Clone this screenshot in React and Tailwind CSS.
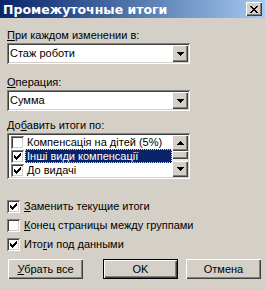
import React from "react";

const sunken =
  "shadow-[inset_1px_1px_0_#808080,inset_-1px_-1px_0_#ffffff,inset_2px_2px_0_#404040,inset_-2px_-2px_0_#d4d0c8]";
const raised =
  "shadow-[inset_1px_1px_0_#ffffff,inset_-1px_-1px_0_#404040,inset_-2px_-2px_0_#808080]";

function CheckMark() {
  const cols = [2, 3, 4, 3, 2, 1, 0];
  return (
    <svg width="7" height="7" viewBox="0 0 7 7" shapeRendering="crispEdges">
      {cols.map((y, x) => (
        <rect key={x} x={x} y={y} width="1" height="3" fill="#000" />
      ))}
    </svg>
  );
}

function Check({ checked }) {
  return (
    <span
      className={`w-[13px] h-[13px] bg-white shrink-0 flex items-center justify-center ${sunken}`}
    >
      {checked && <CheckMark />}
    </span>
  );
}

function DownArrow() {
  return (
    <svg width="7" height="4" viewBox="0 0 7 4" shapeRendering="crispEdges">
      <rect x="0" y="0" width="7" height="1" fill="#000" />
      <rect x="1" y="1" width="5" height="1" fill="#000" />
      <rect x="2" y="2" width="3" height="1" fill="#000" />
      <rect x="3" y="3" width="1" height="1" fill="#000" />
    </svg>
  );
}

function UpArrow() {
  return (
    <svg width="7" height="4" viewBox="0 0 7 4" shapeRendering="crispEdges">
      <rect x="3" y="0" width="1" height="1" fill="#000" />
      <rect x="2" y="1" width="3" height="1" fill="#000" />
      <rect x="1" y="2" width="5" height="1" fill="#000" />
      <rect x="0" y="3" width="7" height="1" fill="#000" />
    </svg>
  );
}

function Combo({ value }) {
  return (
    <div className={`w-[183px] h-[21px] bg-white flex items-center p-[2px] ${sunken}`}>
      <span className="flex-1 pl-[1px]">{value}</span>
      <span
        className={`w-[16px] h-[17px] bg-[#d4d0c8] flex items-center justify-center ${raised}`}
      >
        <DownArrow />
      </span>
    </div>
  );
}

function Button({ children, def }) {
  return (
    <div
      className={`h-[20px] w-[75px] flex items-center justify-center bg-[#d4d0c8] ${
        def
          ? "shadow-[inset_0_0_0_1px_#000,inset_2px_2px_0_#ffffff,inset_-2px_-2px_0_#404040,inset_-3px_-3px_0_#808080]"
          : raised
      }`}
    >
      {children}
    </div>
  );
}

export default function App() {
  return (
    <div className="w-[265px] h-[290px] bg-[#d4d0c8] flex flex-col text-[11px] leading-[13px] text-black font-['Liberation_Sans',Arial,sans-serif] overflow-hidden">
      <div className="h-[18px] bg-linear-to-r from-[#0a246a] to-[#a6caf0] flex items-center justify-between pl-[3px] pr-[3px]">
        <span className="text-white font-bold text-[12.5px] font-['DejaVu_Sans',sans-serif]">
          Промежуточные итоги
        </span>
        <span className={`w-[16px] h-[14px] bg-[#d4d0c8] flex items-center justify-center ${raised}`}>
          <svg width="8" height="7" viewBox="0 0 8 7" shapeRendering="crispEdges">
            {[0, 1, 2, 3, 4, 5, 6].map((i) => (
              <React.Fragment key={i}>
                <rect x={i} y={i} width="2" height="1" fill="#000" />
                <rect x={6 - i} y={i} width="2" height="1" fill="#000" />
              </React.Fragment>
            ))}
          </svg>
        </span>
      </div>

      <div className="flex flex-col px-[7px]">
        <div className="mt-[11px] h-[13px]">
          <span className="underline">П</span>ри каждом изменении в:
        </div>
        <div className="mt-[1px]">
          <Combo value="Стаж роботи" />
        </div>

        <div className="mt-[12px] h-[13px]">
          <span className="underline">О</span>перация:
        </div>
        <div className="mt-[1px]">
          <Combo value="Сумма" />
        </div>

        <div className="mt-[8px] h-[13px]">
          До<span className="underline">б</span>авить итоги по:
        </div>
        <div className={`mt-[1px] w-[183px] h-[46px] bg-white flex p-[2px] ${sunken}`}>
          <div className="flex-1 flex flex-col">
            <div className="h-[14px] flex items-center pl-[2px]">
              <Check />
              <span className="ml-[2px] pl-[1px]">Компенсація на дітей (5%)</span>
            </div>
            <div className="h-[14px] flex items-center pl-[2px]">
              <Check checked />
              <span className="ml-[1px] flex-1 h-[14px] bg-[#0a246a] text-white pl-[2px] flex items-center outline-1 outline-dotted outline-[#f0e080] -outline-offset-1">
                Інші види компенсації
              </span>
            </div>
            <div className="h-[14px] flex items-center pl-[2px]">
              <Check checked />
              <span className="ml-[2px] pl-[1px]">До видачі</span>
            </div>
          </div>
          <div className="w-[16px] flex flex-col">
            <span className={`h-[16px] bg-[#d4d0c8] flex items-center justify-center ${raised}`}>
              <UpArrow />
            </span>
            <span className="flex-1 bg-[#ebe9e4] flex flex-col">
              <span className={`h-[8px] bg-[#d4d0c8] ${raised}`} />
            </span>
            <span className={`h-[16px] bg-[#d4d0c8] flex items-center justify-center ${raised}`}>
              <DownArrow />
            </span>
          </div>
        </div>

        <div className="mt-[21px] flex flex-col gap-[6px]">
          <div className="flex items-center gap-[4px] h-[13px]">
            <Check checked />
            <span>
              <span className="underline">З</span>аменить текущие итоги
            </span>
          </div>
          <div className="flex items-center gap-[4px] h-[13px]">
            <Check />
            <span>
              <span className="underline">К</span>онец страницы между группами
            </span>
          </div>
          <div className="flex items-center gap-[4px] h-[13px]">
            <Check checked />
            <span>
              Ито<span className="underline">г</span>и под данными
            </span>
          </div>
        </div>

        <div className="mt-[8px] flex items-center">
          <div className="ml-[1px]">
            <Button>
              <span>
                <span className="underline">У</span>брать все
              </span>
            </Button>
          </div>
          <div className="ml-[20px]">
            <Button def>OK</Button>
          </div>
          <div className="ml-[8px]">
            <Button>Отмена</Button>
          </div>
        </div>
      </div>
    </div>
  );
}
